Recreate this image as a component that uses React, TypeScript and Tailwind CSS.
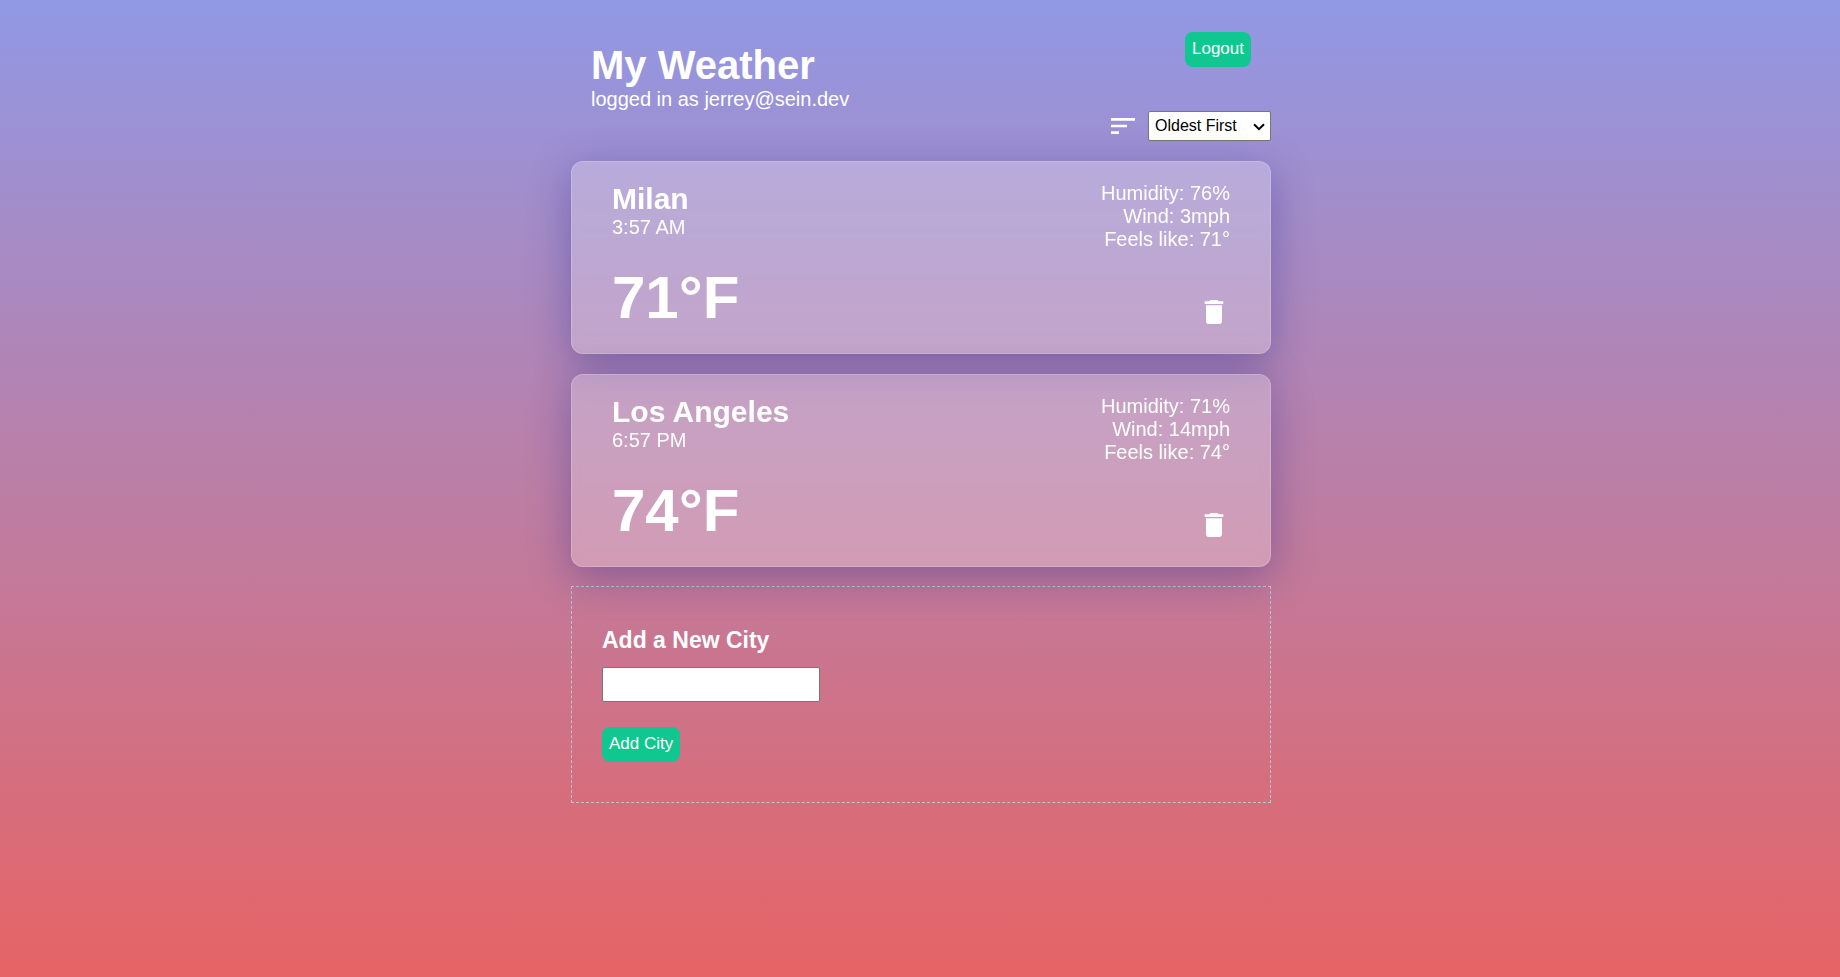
import { useState } from "react";
import { MdDelete, MdSort } from "react-icons/md";

type City = {
  name: string;
  time: string;
  temp: number;
  humidity: number;
  wind: number;
  feelsLike: number;
};

const cities: City[] = [
  { name: "Milan", time: "3:57 AM", temp: 71, humidity: 76, wind: 3, feelsLike: 71 },
  { name: "Los Angeles", time: "6:57 PM", temp: 74, humidity: 71, wind: 14, feelsLike: 74 },
];

const buttonClass =
  "h-[35px] rounded-lg bg-[#10c78f] px-[7px] pb-px text-[17px] leading-5 text-white";

function CityCard({ city }: { city: City }) {
  return (
    <article className="flex justify-between rounded-xl border border-white/[0.18] bg-white/25 px-10 py-5 shadow-[0_10px_40px_0_rgba(31,38,135,0.37)] backdrop-blur-[5px]">
      <div>
        <h2 className="text-[30px] leading-[33px] font-bold">{city.name}</h2>
        <p className="mt-px">{city.time}</p>
        <p className="mt-6 text-[60px] leading-[70px] font-bold">{city.temp}°F</p>
      </div>
      <div className="flex flex-col items-end justify-between text-right">
        <div>
          <p>Humidity: {city.humidity}%</p>
          <p>Wind: {city.wind}mph</p>
          <p>Feels like: {city.feelsLike}°</p>
        </div>
        <button type="button" aria-label={`Delete ${city.name}`} className="mb-[5px]">
          <MdDelete size={32} />
        </button>
      </div>
    </article>
  );
}

export default function App() {
  const [order, setOrder] = useState("oldest");
  const [name, setName] = useState("");
  const shown = order === "oldest" ? cities : [...cities].reverse();

  return (
    <div className="min-h-screen bg-[linear-gradient(#9198e5,#e66465)] pl-0.5 font-['Liberation_Sans',Arial,sans-serif] text-xl leading-[23px] text-white">
      <main className="mx-auto flex max-w-[700px] flex-col pt-8 pb-10">
        <header className="flex items-start justify-between px-5">
          <div className="pt-2.5">
            <h1 className="text-[40px] leading-[46px] font-bold">My Weather</h1>
            <p>logged in as jerrey@sein.dev</p>
          </div>
          <button type="button" className={buttonClass}>
            Logout
          </button>
        </header>

        <div className="flex h-[30px] items-center justify-end gap-[9px]">
          <MdSort size={32} />
          <div className="relative">
            <select
              aria-label="Sort order"
              value={order}
              onChange={(e) => setOrder(e.target.value)}
              className="block h-[30px] w-[123px] appearance-none rounded-xs border border-[#767676] bg-white pl-1.5 text-base leading-5 text-black"
            >
              <option value="oldest">Oldest First</option>
              <option value="newest">Newest First</option>
            </select>
            <svg
              viewBox="0 0 12 8"
              className="pointer-events-none absolute top-3 right-1.5 h-2 w-3 fill-none stroke-black stroke-2"
            >
              <path d="M1 1.2 L6 6.2 L11 1.2" />
            </svg>
          </div>
        </div>

        <section className="mt-5 flex flex-col gap-5">
          {shown.map((city) => (
            <CityCard key={city.name} city={city} />
          ))}
        </section>

        <form
          onSubmit={(e) => e.preventDefault()}
          className="mt-[19px] flex flex-col items-start border border-dashed border-[#b9c6d2] px-[30px] py-10"
        >
          <label htmlFor="city" className="text-[23px] leading-[26px] font-bold">
            Add a New City
          </label>
          <input
            id="city"
            type="text"
            value={name}
            onChange={(e) => setName(e.target.value)}
            className="mt-3.5 h-[35px] w-[218px] rounded-xs border border-[#767676] bg-white px-1 text-[17px] text-black"
          />
          <button type="submit" className={`mt-[25px] ${buttonClass}`}>
            Add City
          </button>
        </form>
      </main>
    </div>
  );
}
